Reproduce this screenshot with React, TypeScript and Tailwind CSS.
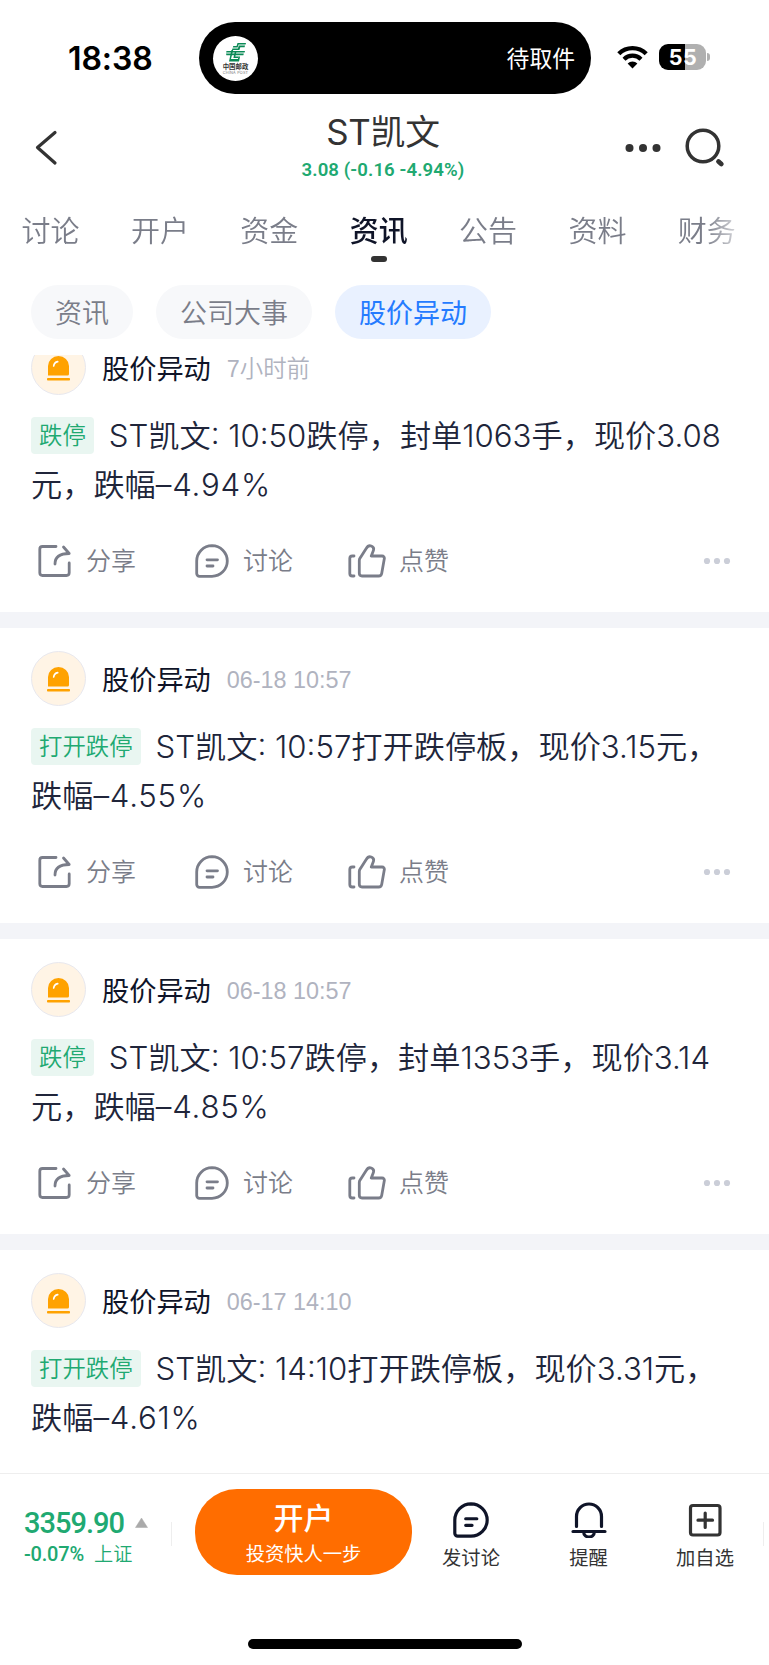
import type { ReactNode } from 'react';

type Post = {
  time: string;
  tag: string;
  body: ReactNode;
};

const posts: Post[] = [
  {
    time: '7小时前',
    tag: '跌停',
    body: <>ST凯文: 10:50跌停，封单1063手，现价3.08<br />元，跌幅<Percent>–4.94%</Percent></>,
  },
  {
    time: '06-18 10:57',
    tag: '打开跌停',
    body: <>ST凯文: 10:57打开跌停板，现价3.15元，<br />跌幅<Percent>–4.55%</Percent></>,
  },
  {
    time: '06-18 10:57',
    tag: '跌停',
    body: <>ST凯文: 10:57跌停，封单1353手，现价3.14<br />元，跌幅<Percent>–4.85%</Percent></>,
  },
  {
    time: '06-17 14:10',
    tag: '打开跌停',
    body: <>ST凯文: 14:10打开跌停板，现价3.31元，<br />跌幅<Percent>–4.61%</Percent></>,
  },
];

const tabs = ['讨论', '开户', '资金', '资讯', '公告', '资料', '财务'];
const chips = ['资讯', '公司大事', '股价异动'];

function Percent({ children }: { children: ReactNode }) {
  return <span className="tracking-[0.8px]">{children}</span>;
}

function PostLogo() {
  return (
    <div className="flex h-[45px] w-[45px] flex-col items-center rounded-full bg-white pt-[7px]">
      <svg width="20" height="19" viewBox="0 0 20 19" fill="#0b8a56">
        <path d="M11.500 0H20l-.4 1.600h-7l-1 3H6.800l.5-1.700h3.300z" />
        <path d="M12.800 2.600H19l-.4 1.600h-4.300L13.400 7H6l.4-1.600h5.500z" />
        <path d="M.5 8H19l-.4 1.600H.1zM0 10.600h17.800l-.4 1.600H.4z" />
        <path d="M5.400 7h1.800L5 16h7l.4-2.400h1.700L13 18.600H3z" />
        <path d="M9 8h1.600l-1.300 5.600h3.200L12.200 15H7.400z" />
      </svg>
      <span className="mt-[2px] text-[6.4px] font-bold leading-[7px] text-[#333]">中国邮政</span>
      <span className="text-[3.8px] leading-[4px] tracking-[0.2px] text-[#777]">CHINA POST</span>
    </div>
  );
}

function StatusBar() {
  return (
    <div className="flex h-[94px] items-start pt-[22px]">
      <div className="w-[199px] pl-[68px] pt-px text-[32px] font-semibold leading-[71px] tracking-[-0.1px] text-black">18:38</div>
      <div className="flex h-[72px] w-[392px] items-center justify-between rounded-full bg-black pl-[14px] pr-[16px]">
        <PostLogo />
        <span className="pt-[3px] text-[22.8px] text-white">待取件</span>
      </div>
      <svg className="ml-[26px] mt-[23px]" width="31" height="24" viewBox="0 0 31 24" fill="none" stroke="#000">
        <path d="M1.800 8.700a19.500 19.500 0 0 1 27.400 0" strokeWidth="4.400" />
        <path d="M7 14.200a12 12 0 0 1 17 0" strokeWidth="4.200" />
        <path d="M10.600 18.500a7 7 0 0 1 9.800 0L15.500 23.500z" fill="#000" stroke="none" />
      </svg>
      <div className="ml-[11px] mt-[22px] flex items-center">
        <div className="flex h-[26px] w-[47px] items-center justify-center rounded-[9px] bg-[linear-gradient(to_right,#000_25.5px,#b0b0b0_25.5px)] pl-px text-[21.500px] font-bold tracking-[0.4px] text-white">55</div>
        <div className="ml-[1px] h-[8px] w-[3px] rounded-r-full bg-[#b0b0b0]" />
      </div>
    </div>
  );
}

function Header() {
  return (
    <header className="flex h-[108px] items-start justify-between pl-[34px] pr-[43px]">
      <svg className="mt-[36px]" width="24" height="36" viewBox="0 0 24 36" fill="none" stroke="#333" strokeWidth="3.200" strokeLinecap="round" strokeLinejoin="round">
        <path d="M21 2.500L3.500 17.500L21 33" />
      </svg>
      <div className="ml-[83px] flex w-[220px] flex-col items-center pt-[17px]">
        <h1 className="text-[34.800px] leading-[42px] tracking-[-0.2px] text-[#333]">ST凯文</h1>
        <p className="mt-[6px] whitespace-nowrap font-['Roboto'] text-[18.6px] font-semibold leading-[22px] tracking-[0.1px] text-[#20a971]">3.08 (-0.16 -4.94%)</p>
      </div>
      <div className="flex gap-[24px] pt-[33px]">
        <svg width="36" height="42" viewBox="0 0 36 42" fill="#333">
          <circle cx="4.500" cy="21" r="4" />
          <circle cx="18" cy="21" r="4" />
          <circle cx="31.500" cy="21" r="4" />
        </svg>
        <svg width="41" height="42" viewBox="0 0 41 42" fill="none" stroke="#333" strokeWidth="3.500" strokeLinecap="round">
          <circle cx="18" cy="19" r="15.800" />
          <path d="M33.500 34.500l2.800 2.500" strokeWidth="4.800" />
        </svg>
      </div>
    </header>
  );
}

function Tabs() {
  return (
    <nav className="flex h-[83px] overflow-hidden pl-[21.500px] pt-[9px] [mask-image:linear-gradient(to_right,#000_705px,transparent_752px)]">
      {tabs.map((tab) => (
        <div key={tab} className="flex w-[109.400px] shrink-0 flex-col items-start">
          <div className="flex flex-col items-center">
            <span className={tab === '资讯' ? 'text-[29px] font-medium leading-[42px] text-[#0f1428]' : 'text-[29px] font-[350] leading-[42px] text-[#7a7d89]'}>{tab}</span>
            {tab === '资讯' && <span className="mt-[3px] h-[6px] w-[16px] rounded-full bg-[#333]" />}
          </div>
        </div>
      ))}
    </nav>
  );
}

function Chips() {
  return (
    <div className="flex h-[70px] gap-[23px] pl-[31px]">
      {chips.map((chip) => (
        <span
          key={chip}
          className={
            chip === '股价异动'
              ? 'flex h-[54px] items-center rounded-full bg-[#e9f1ff] px-[24px] pt-[4px] text-[27px] text-[#257bff]'
              : 'flex h-[54px] items-center rounded-full bg-[#f7f8fa] px-[24px] pt-[4px] text-[27px] font-[350] text-[#7a7d89]'
          }
        >
          {chip}
        </span>
      ))}
    </div>
  );
}

function AlarmAvatar() {
  return (
    <div className="flex h-[55px] w-[55px] items-center justify-center rounded-full border border-[#e8e8ee] bg-[#fff4e5]">
      <svg width="23" height="26" viewBox="0 0 23 26">
        <path d="M1 20.500V11a10.500 10 0 0 1 21 0v8a1.500 1.500 0 0 1-1.500 1.500z" fill="#ffa200" />
        <rect x="0" y="23" width="23" height="2.500" rx=".8" fill="#ffa200" />
        <path d="M6.700 11a5 5 0 0 1 4-4.300" fill="none" stroke="#fff" strokeWidth="1.700" strokeLinecap="round" />
      </svg>
    </div>
  );
}

function ShareIcon() {
  return (
    <svg width="34" height="34" viewBox="0 0 34 34" fill="none" stroke="#7a7d89" strokeWidth="2.800" strokeLinecap="round" strokeLinejoin="round">
      <path d="M18 2.500H4.500a2.700 2.700 0 0 0-2.700 2.700v23.600a2.700 2.700 0 0 0 2.700 2.700h24a2.700 2.700 0 0 0 2.700-2.700V19" />
      <path d="M17 20c0-7 4.500-10.500 14.200-10.500L25.500 3" />
    </svg>
  );
}

function ChatIcon({ className, strokeWidth }: { className: string; strokeWidth: number }) {
  return (
    <svg className={className} viewBox="0 0 34 34" fill="none" stroke="currentColor" strokeWidth={strokeWidth} strokeLinecap="round" strokeLinejoin="round">
      <path d="M17 1.700a15.300 15.300 0 0 1 0 30.600H4.500a2.800 2.800 0 0 1-2.800-2.800V17A15.300 15.300 0 0 1 17 1.700z" />
      <path d="M12 15.800h10.500M12 22h6" />
    </svg>
  );
}

function LikeIcon() {
  return (
    <svg width="38" height="34" viewBox="0 0 38 34" fill="none" stroke="#7a7d89" strokeWidth="2.800" strokeLinecap="round" strokeLinejoin="round">
      <path d="M6 12H4.300a2.500 2.500 0 0 0-2.500 2.500v15A2.500 2.500 0 0 0 4.300 32H6" />
      <path d="M11.300 29.300V16.500c0-1.100.3-1.900 1-2.800L18.200 4.500c1.200-2.100 3-3.200 5-2.500 2.200.8 2.900 2.600 2.100 4.800L23.300 12H34c1.700 0 2.600 1.200 2.300 2.800l-2.600 14.700c-.3 1.700-1.300 2.500-3 2.500H14c-1.700 0-2.700-1-2.700-2.700z" />
    </svg>
  );
}

function PostActions() {
  return (
    <div className="mt-[33px] flex h-[36px] items-center text-[25px] font-[350] text-[#7a7d89]">
      <div className="flex w-[156px] items-center gap-[14px] pl-[7px]"><ShareIcon /><span className="pt-[2px]">分享</span></div>
      <div className="flex w-[161px] items-center gap-[14px] pl-[8px]"><ChatIcon className="h-[34px] w-[34px]" strokeWidth={2.8} /><span className="pt-[2px]">讨论</span></div>
      <div className="flex items-center gap-[13px]"><LikeIcon /><span className="pt-[2px]">点赞</span></div>
      <svg className="ml-auto" width="28" height="8" viewBox="0 0 28 8" fill="#cbced8">
        <circle cx="4" cy="4" r="3.100" />
        <circle cx="14" cy="4" r="3.100" />
        <circle cx="24" cy="4" r="3.100" />
      </svg>
    </div>
  );
}

function PostCard({ time, tag, body, actions }: Post & { actions: boolean }) {
  return (
    <article className="h-[311px] shrink-0 border-b-[16px] border-[#f3f4f8] bg-white pl-[31px] pr-[38px] pt-[23px]">
      <div className="flex h-[55px] items-center">
        <AlarmAvatar />
        <span className="ml-[16px] pt-[4px] text-[27.200px] leading-[36px] text-[#0f1428]">股价异动</span>
        <span className="ml-[16px] pt-[2px] font-['Liberation_Sans','Noto_Sans_CJK_SC',sans-serif] text-[23.400px] font-[350] leading-[36px] text-[#b0b3bf]">{time}</span>
      </div>
      <p className="mt-[17px] whitespace-nowrap text-[31.200px] font-[350] leading-[49px] text-[#20253a]">
        <span className="mr-[15px] inline-flex h-[37px] items-center rounded-[4px] bg-[#e9f6f1] px-[8px] align-[3px] text-[23.400px] leading-[37px] text-[#20a971]">{tag}</span>
        {body}
      </p>
      {actions && <PostActions />}
    </article>
  );
}

function BottomBar() {
  return (
    <footer className="flex h-[192px] flex-col border-t border-[#eee] bg-white">
      <div className="flex h-[117px] shrink-0 items-start">
        <div className="w-[171px] pl-[24px] pt-[32px] font-['Roboto','Noto_Sans_CJK_SC',sans-serif] text-[#20a971]">
          <div className="flex items-center">
            <span className="w-[111px] text-[29px] font-medium leading-[34px] tracking-[-1px]">3359.90</span>
            <svg width="13" height="10" viewBox="0 0 13 10" fill="#aaa">
              <path d="M6.500 0L12.500 9.500H.5z" stroke="#aaa" strokeLinejoin="round" strokeWidth=".5" />
            </svg>
          </div>
          <div className="flex gap-[10px] text-[19.200px] leading-[28px]">
            <span className="text-[20px] font-medium tracking-[-0.2px]">-0.07%</span>
            <span className="pt-px font-[350]">上证</span>
          </div>
        </div>
        <div className="mt-[48px] h-[24px] w-px bg-[#eee]" />
        <div className="ml-[23px] mt-[15px] flex h-[86px] w-[217px] flex-col items-center rounded-[42px] bg-[#ff6d00] text-white">
          <span className="mt-[8px] text-[30px] font-medium leading-[42px]">开户</span>
          <span className="mt-px text-[19.300px] leading-[28px]">投资快人一步</span>
        </div>
        <div className="flex flex-1 pt-[28px] text-[19.300px] text-[#333]">
          <div className="flex w-[118px] flex-col items-center">
            <ChatIcon className="h-[36px] w-[36px] text-[#0f1428]" strokeWidth={3} />
            <span className="mt-[6px] leading-[28px]">发讨论</span>
          </div>
          <div className="flex w-[117px] flex-col items-center">
            <svg width="36" height="36" viewBox="0 0 36 36" fill="none" stroke="#0f1428" strokeWidth="3.200" strokeLinecap="round">
              <path d="M5.500 24.500V14.500a12.500 12.500 0 0 1 25 0v10M2 29.500h32M12.700 30a5.300 5 0 0 0 10.600 0" />
            </svg>
            <span className="mt-[6px] leading-[28px]">提醒</span>
          </div>
          <div className="flex w-[116px] flex-col items-center">
            <svg width="36" height="36" viewBox="0 0 36 36" fill="none" stroke="#333" strokeWidth="3.200" strokeLinecap="round">
              <rect x="3.500" y="3.500" width="29.500" height="29.500" rx="2.500" />
              <path d="M18.200 11v14.500M11 18.200h14.500" />
            </svg>
            <span className="mt-[6px] leading-[28px]">加自选</span>
          </div>
          <div className="mt-[20px] h-[24px] w-px bg-[#eee]" />
        </div>
      </div>
      <div className="mx-auto mt-[48px] h-[10px] w-[274px] rounded-full bg-black" />
    </footer>
  );
}

export default function App() {
  return (
    <div className="flex h-[1665px] w-[769px] flex-col overflow-hidden bg-white font-['Inter','Noto_Sans_CJK_SC',sans-serif]">
      <StatusBar />
      <Header />
      <Tabs />
      <Chips />
      {/* feed is scrolled a little under the chips */}
      <main className="min-h-0 flex-1 overflow-hidden">
        <div className="-mt-[38px] flex flex-col">
          {posts.map((post, i) => (
            <PostCard key={i} {...post} actions={i < posts.length - 1} />
          ))}
        </div>
      </main>
      <BottomBar />
    </div>
  );
}
